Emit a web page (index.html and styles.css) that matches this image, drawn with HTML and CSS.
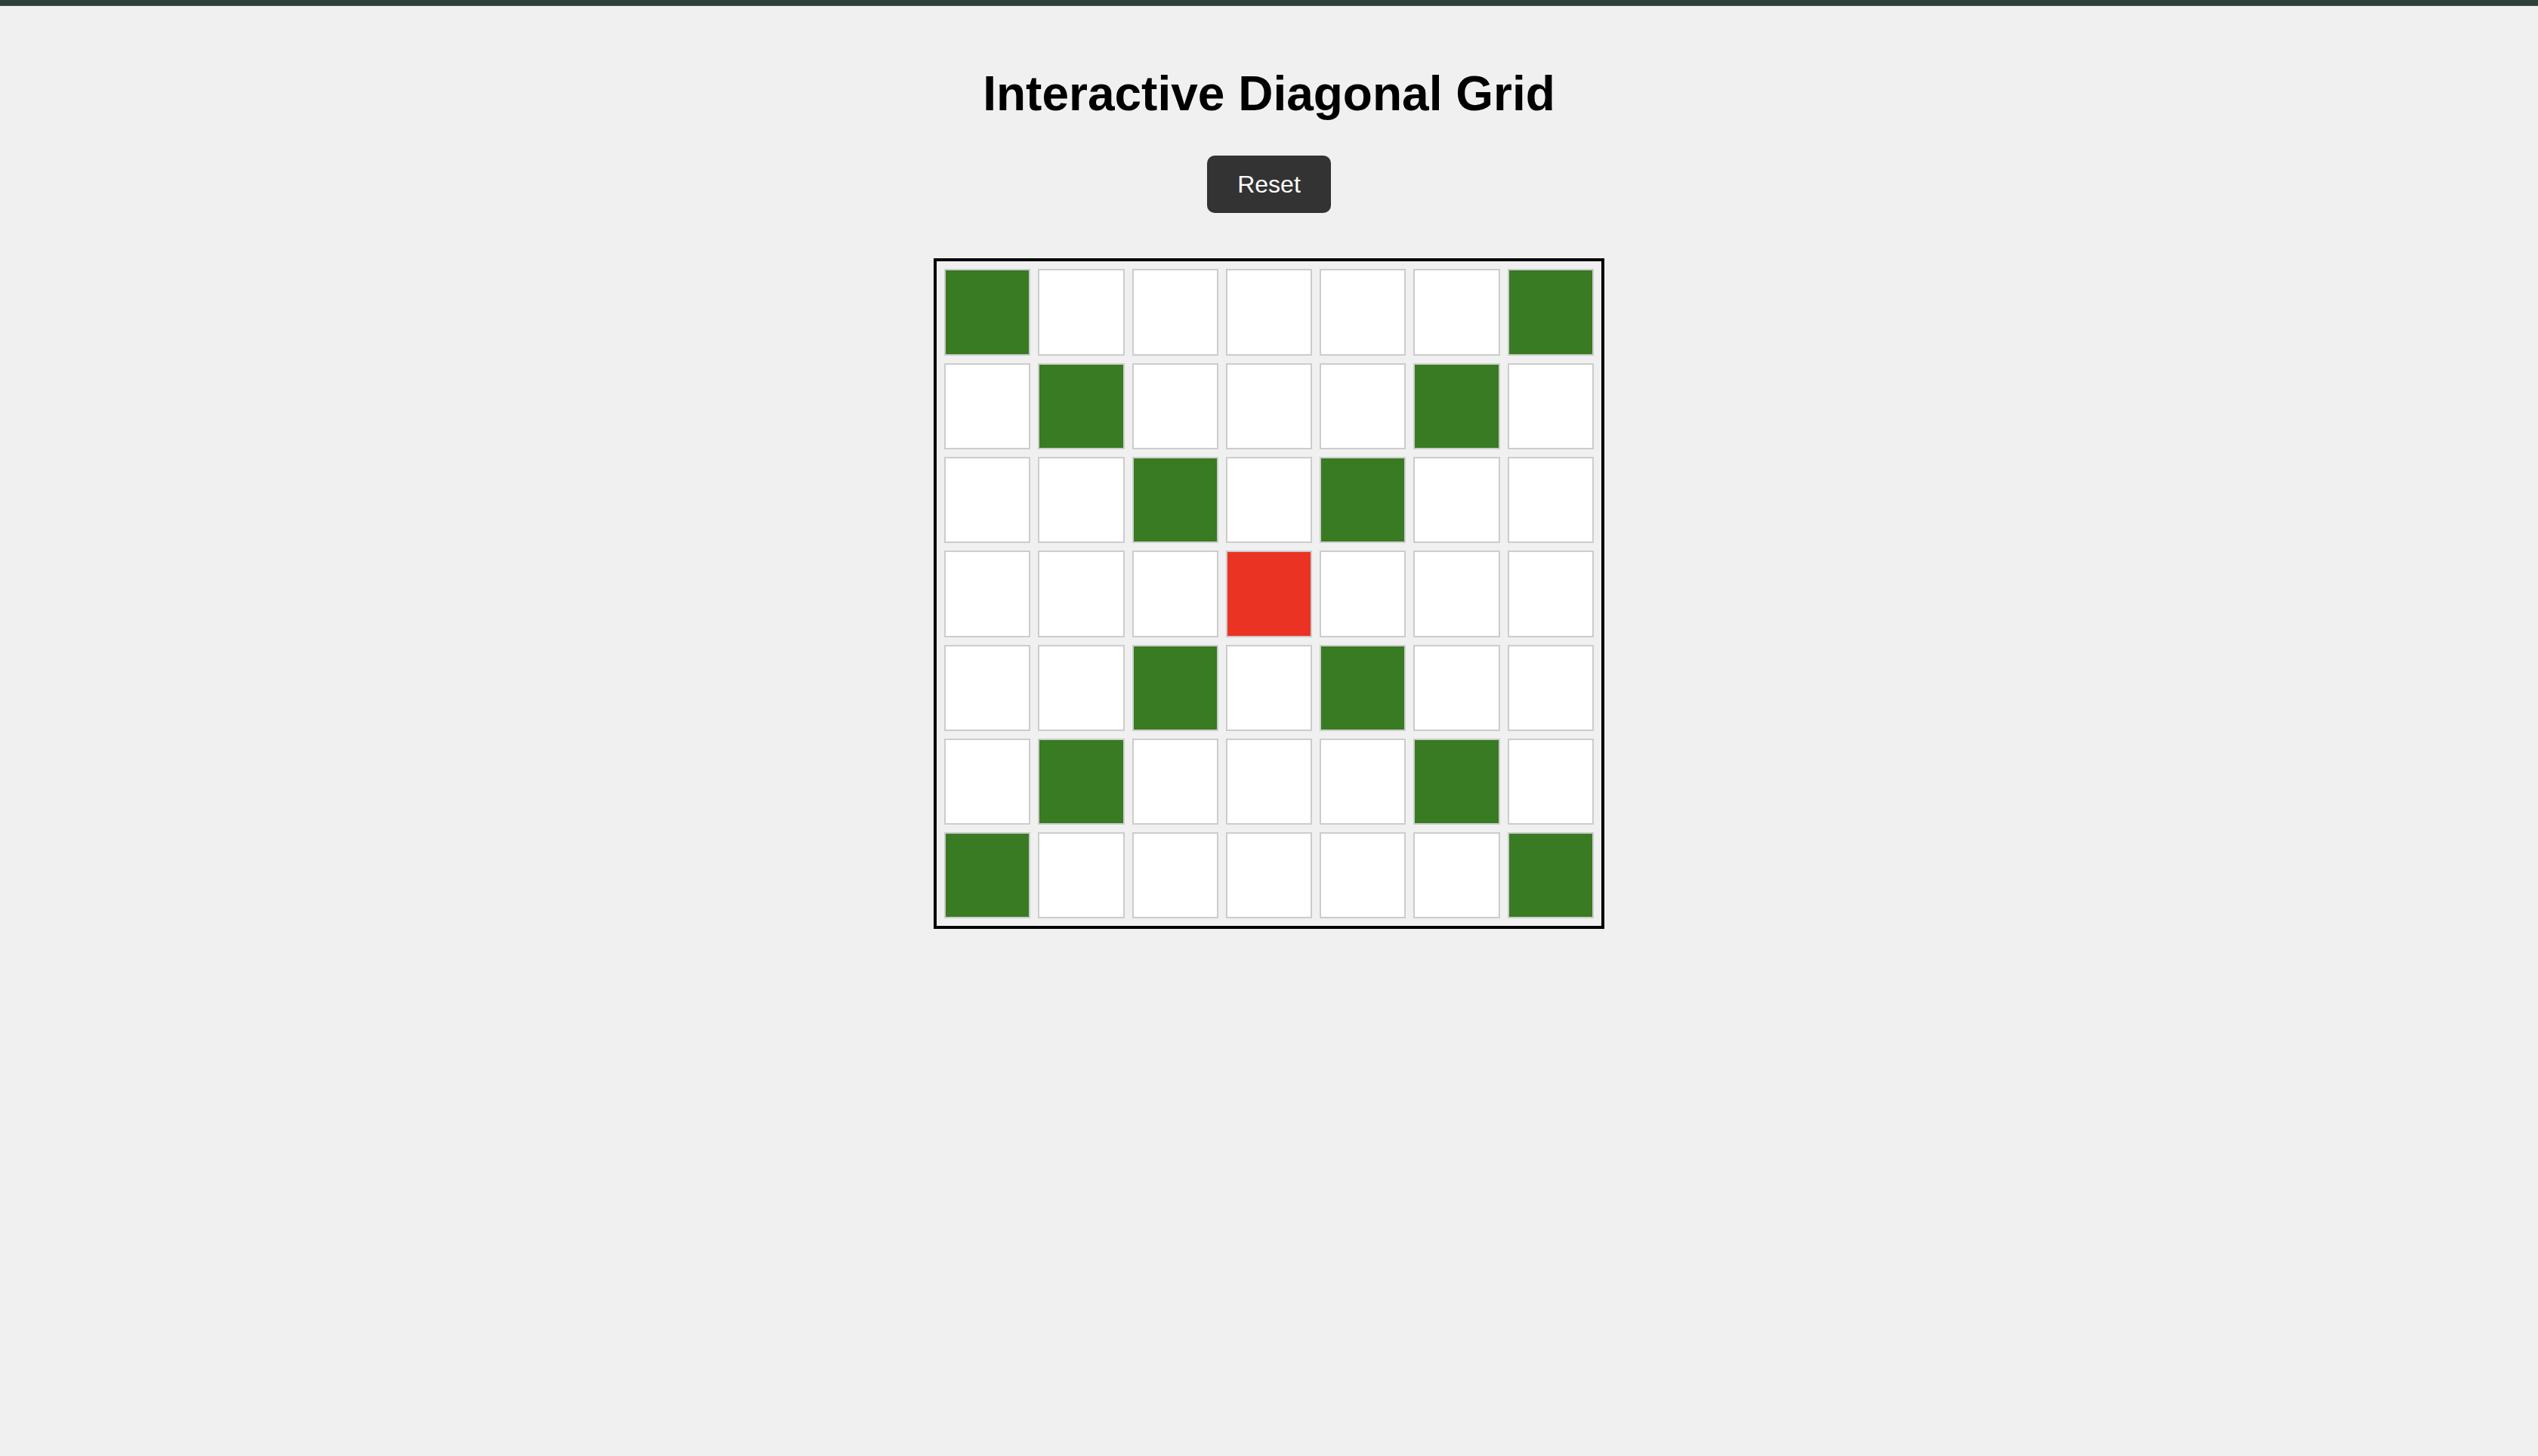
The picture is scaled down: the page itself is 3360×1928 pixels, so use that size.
FILE: index.html
```html
<!DOCTYPE html>
<html lang="en">
<head>
<meta charset="utf-8">
<title>Interactive Diagonal Grid</title>
<link rel="stylesheet" href="styles.css">
</head>
<body>
<div class="topbar"></div>
<main class="page">
  <h1 class="title">Interactive Diagonal Grid</h1>
  <button class="reset" type="button">Reset</button>
  <div class="grid">
    <div class="cell on"></div><div class="cell"></div><div class="cell"></div><div class="cell"></div><div class="cell"></div><div class="cell"></div><div class="cell on"></div>
    <div class="cell"></div><div class="cell on"></div><div class="cell"></div><div class="cell"></div><div class="cell"></div><div class="cell on"></div><div class="cell"></div>
    <div class="cell"></div><div class="cell"></div><div class="cell on"></div><div class="cell"></div><div class="cell on"></div><div class="cell"></div><div class="cell"></div>
    <div class="cell"></div><div class="cell"></div><div class="cell"></div><div class="cell center"></div><div class="cell"></div><div class="cell"></div><div class="cell"></div>
    <div class="cell"></div><div class="cell"></div><div class="cell on"></div><div class="cell"></div><div class="cell on"></div><div class="cell"></div><div class="cell"></div>
    <div class="cell"></div><div class="cell on"></div><div class="cell"></div><div class="cell"></div><div class="cell"></div><div class="cell on"></div><div class="cell"></div>
    <div class="cell on"></div><div class="cell"></div><div class="cell"></div><div class="cell"></div><div class="cell"></div><div class="cell"></div><div class="cell on"></div>
  </div>
</main>
</body>
</html>
```

FILE: styles.css
```css
html, body {
  margin: 0;
  padding: 0;
}
body {
  background: #f0f0f0;
  font-family: "Liberation Sans", Arial, sans-serif;
  min-height: 1928px;
}
.topbar {
  height: 7px;
  background: #2d403b;
  border-bottom: 1px solid #4a5652;
}
.page {
  display: flex;
  flex-direction: column;
  align-items: center;
}
.title {
  margin: 80px 0 44px;
  font-size: 64px;
  font-weight: bold;
  line-height: 1.15;
  color: #000;
}
.reset {
  font-family: "Liberation Sans", Arial, sans-serif;
  font-size: 32px;
  line-height: 1.15;
  color: #fff;
  background: #333;
  border: none;
  border-radius: 10px;
  padding: 20px 40px;
  margin: 0 0 60px;
  cursor: pointer;
}
.grid {
  width: 888px;
  height: 888px;
  box-sizing: border-box;
  border: 4px solid #000;
  padding: 10px;
  display: grid;
  grid-template-columns: repeat(7, 1fr);
  grid-template-rows: repeat(7, 1fr);
  gap: 10px;
}
.cell {
  background: #fff;
  border: 2px solid #ccc;
}
.cell.on {
  background: #387b22;
}
.cell.center {
  background: #ea3323;
}
```
